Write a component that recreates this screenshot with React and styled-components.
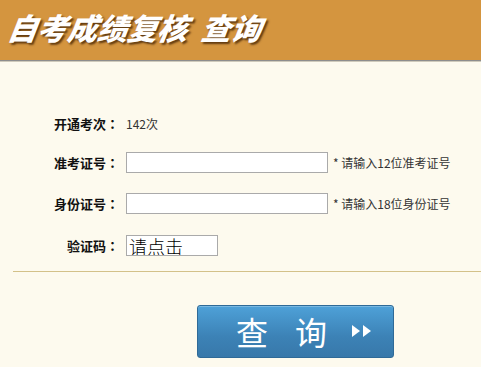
import React from "react";
import styled, { createGlobalStyle } from "styled-components";

const GlobalStyle = createGlobalStyle`
  html, body {
    margin: 0;
    padding: 0;
    background: #fdfaee;
  }
  body {
    font-family: "Noto Sans CJK SC", "Liberation Sans", sans-serif;
    color: #222;
  }
`;

const Page = styled.div`
  width: 481px;
  height: 367px;
  overflow: hidden;
  background: #fdfaee;
`;

const Header = styled.div`
  height: 60px;
  background: #d4953f;
  border-bottom: 1px solid #8d8d8d;
  box-shadow: 0 1px 0 #cfcabb;
  display: flex;
  align-items: center;
  padding-left: 8px;
`;

const Title = styled.h1`
  margin: -6px 0 0;
  font-size: 30px;
  font-weight: 900;
  font-style: italic;
  color: #fff;
  white-space: pre;
  text-shadow: 2px 2px 2px rgba(60, 30, 0, 0.75);
  line-height: 1;
  transform: skewX(-8deg);
`;

const Form = styled.div`
  display: flex;
  flex-direction: column;
  padding-top: 52px;
`;

const Row = styled.div`
  display: flex;
  align-items: center;
  height: 21px;
  margin-top: ${(p) => p.$top || 0}px;
`;

const Label = styled.span`
  width: 119px;
  text-align: right;
  margin-right: 7px;
  font-size: 13px;
  font-weight: 700;
  color: #111;
  white-space: nowrap;
`;

const Colon = styled.span`
  font-family: "Noto Sans CJK TC", sans-serif;
`;

const Value = styled.span`
  font-size: 12px;
  color: #333;
`;

const Input = styled.input`
  box-sizing: border-box;
  width: ${(p) => p.$w}px;
  height: 21px;
  border: 1px solid #aaa;
  background: #fff;
  padding: 0 2px;
  margin: 0;
  font-family: "Noto Sans CJK SC", sans-serif;
  font-size: ${(p) => p.$fs || 12}px;
  font-weight: 300;
  color: #000;
  outline: none;
  &::placeholder {
    color: #000;
  }
`;

const Hint = styled.span`
  margin-left: 5px;
  font-size: 12px;
  color: #333;
  white-space: nowrap;
`;

const Divider = styled.hr`
  margin: 15px 0 0 13px;
  border: none;
  border-top: 1px solid #d3c189;
  height: 0;
`;

const ButtonRow = styled.div`
  display: flex;
  padding: 33px 0 0 197px;
`;

const SearchButton = styled.button`
  box-sizing: border-box;
  width: 197px;
  height: 53px;
  border: 1px solid #2f6a97;
  border-radius: 3px;
  background: linear-gradient(#4ea1d8, #3c82b6 60%, #3878aa);
  color: #fff;
  display: flex;
  align-items: center;
  padding: 0 0 2px 38px;
  cursor: pointer;
  font-family: "Noto Sans CJK SC", sans-serif;
  font-size: 32px;
  font-weight: 400;
  box-shadow: inset 0 1px 0 rgba(255, 255, 255, 0.25);
`;

const BtnChar = styled.span`
  margin-right: ${(p) => p.$mr}px;
  line-height: 1;
`;

const Arrows = styled.svg`
  width: 22px;
  height: 14px;
`;

const fields = [
  { label: "准考证号", hint: "* 请输入12位准考证号", top: 18 },
  { label: "身份证号", hint: "* 请输入18位身份证号", top: 20 },
];

export default function App() {
  return (
    <Page>
      <GlobalStyle />
      <Header>
        <Title>{"自考成绩复核  查询"}</Title>
      </Header>
      <Form>
        <Row>
          <Label>
            开通考次<Colon>：</Colon>
          </Label>
          <Value>142次</Value>
        </Row>
        {fields.map((f) => (
          <Row key={f.label} $top={f.top}>
            <Label>
              {f.label}
              <Colon>：</Colon>
            </Label>
            <Input $w={202} />
            <Hint>{f.hint}</Hint>
          </Row>
        ))}
        <Row $top={21}>
          <Label>
            验证码<Colon>：</Colon>
          </Label>
          <Input $w={92} $fs={18} placeholder="请点击" />
        </Row>
      </Form>
      <Divider />
      <ButtonRow>
        <SearchButton>
          <BtnChar $mr={27}>查</BtnChar>
          <BtnChar $mr={24}>询</BtnChar>
          <Arrows viewBox="0 0 22 14">
            <polygon points="1,1 9,7 1,13" fill="#fff" />
            <polygon points="12,1 20,7 12,13" fill="#fff" />
          </Arrows>
        </SearchButton>
      </ButtonRow>
    </Page>
  );
}
